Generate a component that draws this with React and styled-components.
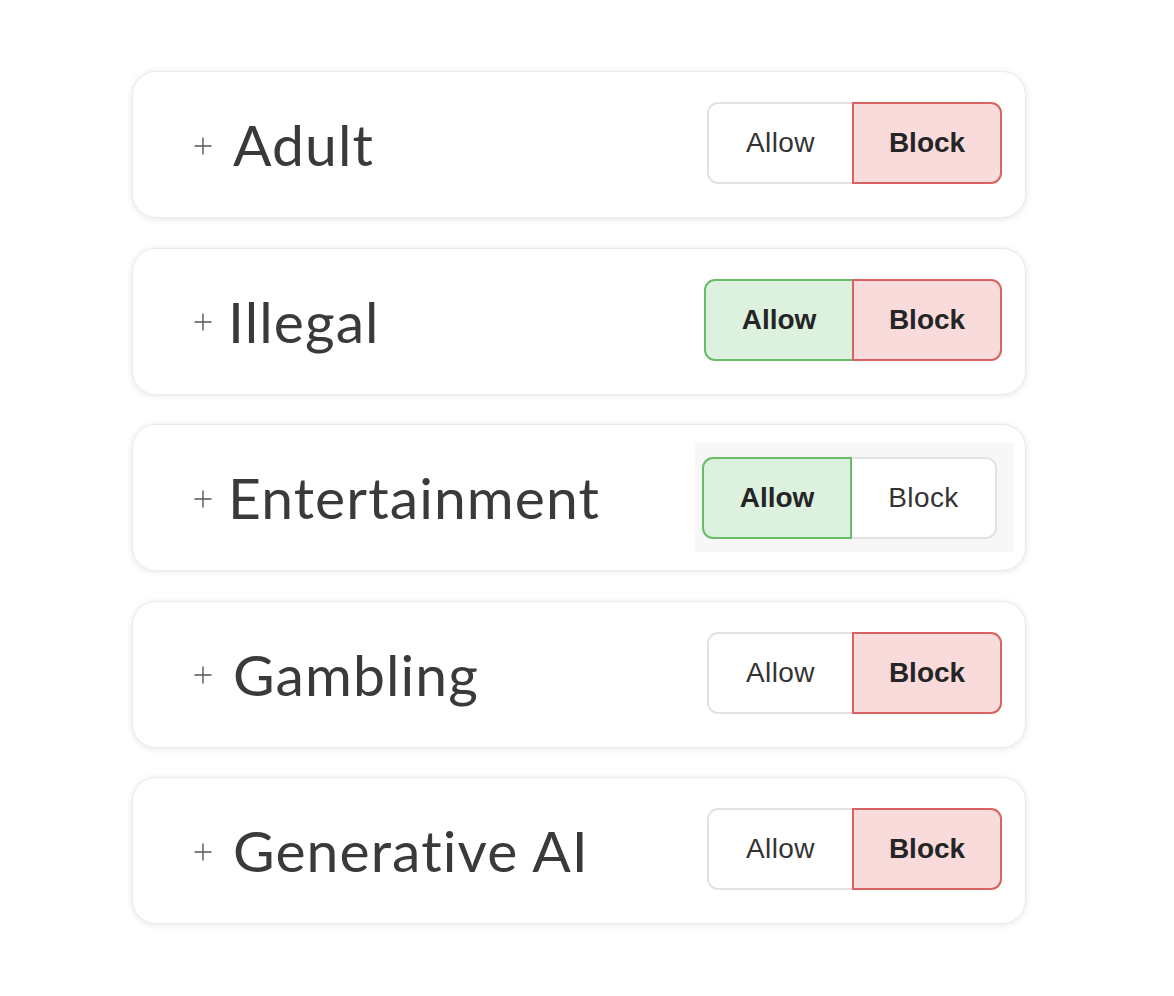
import React from "react";
import styled, { createGlobalStyle, css } from "styled-components";

const GlobalStyle = createGlobalStyle`
  html, body {
    margin: 0;
    padding: 0;
    background: #ffffff;
  }
  body {
    font-family: "Lato", "Liberation Sans", sans-serif;
  }
`;

const Page = styled.main`
  width: 1174px;
  height: 996px;
  padding-top: 71px;
  padding-left: 132px;
  box-sizing: border-box;
`;

const List = styled.section`
  width: 894px;
  display: flex;
  flex-direction: column;
  gap: 29.5px;
`;

const Card = styled.div`
  height: 147px;
  box-sizing: border-box;
  display: flex;
  align-items: center;
  justify-content: space-between;
  padding: 0 23px 0 61px;
  background: #fff;
  border: 1px solid #ebebeb;
  border-radius: 24px;
  box-shadow: 0 1px 7px rgba(0, 0, 0, 0.1);
`;

const Title = styled.div`
  display: flex;
  align-items: center;
`;

const PlusIcon = styled.svg`
  width: 18px;
  height: 18px;
  flex-shrink: 0;
  margin-top: 2px;
`;

const Label = styled.h3`
  margin: 0 0 0 ${(p) => p.$indent}px;
  font-family: "Lato", "Liberation Sans", sans-serif;
  font-weight: 400;
  font-size: 57px;
  line-height: 1;
  color: #3a3a3a;
  letter-spacing: 1.1px;
`;

const Backdrop = styled.div`
  background: #f7f7f7;
  padding: 14px 17px 13px 7px;
  margin-right: -12px;
`;

const Toggle = styled.div`
  display: flex;
  height: 82px;
  margin-bottom: ${(p) => (p.$flush ? 0 : 3)}px;
`;

const Segment = styled.button`
  box-sizing: border-box;
  height: 100%;
  width: ${(p) => (p.$active ? 150 : 147)}px;
  display: flex;
  align-items: center;
  justify-content: center;
  padding: 0;
  font-family: "Liberation Sans", Arial, sans-serif;
  font-size: 28px;
  font-weight: 400;
  letter-spacing: 0.4px;
  color: #333;
  background: #fff;
  border: 2px solid #e2e2e2;
  cursor: pointer;

  &:first-child {
    border-radius: 11px 0 0 11px;
  }
  &:last-child {
    margin-left: -2px;
    border-radius: 0 11px 11px 0;
  }

  ${(p) =>
    p.$active &&
    css`
      position: relative;
      z-index: 1;
      font-weight: 700;
      letter-spacing: 0;
      color: #252525;
    `}

  ${(p) =>
    p.$active === "allow" &&
    css`
      background: #ddf1df;
      border-color: #68bd68;
    `}

  ${(p) =>
    p.$active === "block" &&
    css`
      background: #f9dbdb;
      border-color: #d86262;
    `}
`;

const Plus = () => (
  <PlusIcon viewBox="0 0 18 18">
    <path d="M9 0.5v17M0.5 9h17" stroke="#555" strokeWidth="1.4" fill="none" />
  </PlusIcon>
);

const AllowBlock = ({ allow, block, flush }) => (
  <Toggle $flush={flush}>
    <Segment $active={allow ? "allow" : undefined}>Allow</Segment>
    <Segment $active={block ? "block" : undefined}>Block</Segment>
  </Toggle>
);

const categories = [
  { name: "Adult", indent: 21, allow: false, block: true },
  { name: "Illegal", indent: 16, allow: true, block: true },
  { name: "Entertainment", indent: 16, allow: true, block: false, backdrop: true },
  { name: "Gambling", indent: 21, allow: false, block: true },
  { name: "Generative AI", indent: 21, allow: false, block: true },
];

export default function App() {
  return (
    <Page>
      <GlobalStyle />
      <List>
        {categories.map((c) => (
          <Card key={c.name}>
            <Title>
              <Plus />
              <Label $indent={c.indent}>{c.name}</Label>
            </Title>
            {c.backdrop ? (
              <Backdrop>
                <AllowBlock allow={c.allow} block={c.block} flush />
              </Backdrop>
            ) : (
              <AllowBlock allow={c.allow} block={c.block} />
            )}
          </Card>
        ))}
      </List>
    </Page>
  );
}
